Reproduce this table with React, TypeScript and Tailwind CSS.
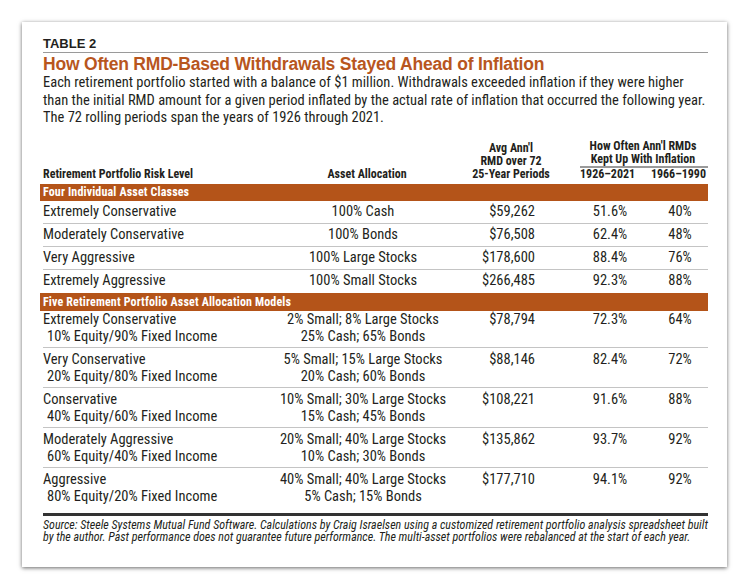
import React from "react";

const COND = "font-['Roboto',sans-serif] font-stretch-[78%]";

type Single = { name: string; alloc: string; rmd: string; a: string; b: string };
type Multi = { name: string; sub: string; alloc1: string; alloc2: string; rmd: string; a: string; b: string };

const singles: Single[] = [
  { name: "Extremely Conservative", alloc: "100% Cash", rmd: "$59,262", a: "51.6%", b: "40%" },
  { name: "Moderately Conservative", alloc: "100% Bonds", rmd: "$76,508", a: "62.4%", b: "48%" },
  { name: "Very Aggressive", alloc: "100% Large Stocks", rmd: "$178,600", a: "88.4%", b: "76%" },
  { name: "Extremely Aggressive", alloc: "100% Small Stocks", rmd: "$266,485", a: "92.3%", b: "88%" },
];

const multis: Multi[] = [
  { name: "Extremely Conservative", sub: "10% Equity/90% Fixed Income", alloc1: "2% Small; 8% Large Stocks", alloc2: "25% Cash; 65% Bonds", rmd: "$78,794", a: "72.3%", b: "64%" },
  { name: "Very Conservative", sub: "20% Equity/80% Fixed Income", alloc1: "5% Small; 15% Large Stocks", alloc2: "20% Cash; 60% Bonds", rmd: "$88,146", a: "82.4%", b: "72%" },
  { name: "Conservative", sub: "40% Equity/60% Fixed Income", alloc1: "10% Small; 30% Large Stocks", alloc2: "15% Cash; 45% Bonds", rmd: "$108,221", a: "91.6%", b: "88%" },
  { name: "Moderately Aggressive", sub: "60% Equity/40% Fixed Income", alloc1: "20% Small; 40% Large Stocks", alloc2: "10% Cash; 30% Bonds", rmd: "$135,862", a: "93.7%", b: "92%" },
  { name: "Aggressive", sub: "80% Equity/20% Fixed Income", alloc1: "40% Small; 40% Large Stocks", alloc2: "5% Cash; 15% Bonds", rmd: "$177,710", a: "94.1%", b: "92%" },
];

function Bar({ children, h }: { children: React.ReactNode; h: string }) {
  return (
    <div className={`${h} -ml-[3px] pl-[3px] bg-[#b45419] text-white font-bold text-[12px] flex items-center leading-none tracking-[0.15px]`}>
      {children}
    </div>
  );
}

export default function App() {
  return (
    <div className="w-[750px] h-[586px] bg-white pt-[22px] pl-[22px]">
      <div className={`w-[705px] h-[545px] bg-white shadow-[0_1px_4px_rgba(0,0,0,0.6)] pl-[21px] pr-[19px] pt-[14px] text-[#231f20] ${COND}`}>
        <div className="font-['Liberation_Sans',Arial,sans-serif] font-stretch-normal font-bold text-[13px] leading-[15px]">TABLE 2</div>
        <div className="mt-[1px] h-px bg-[#9a9a9a]" />
        <div className="font-['Liberation_Sans',Arial,sans-serif] font-stretch-normal font-bold text-[17.5px] leading-[20px] mt-[1px] text-[#b8561e] tracking-[-0.2px]">
          How Often RMD-Based Withdrawals Stayed Ahead of Inflation
        </div>
        <div className="text-[14.5px] leading-[17.5px]">
          Each retirement portfolio started with a balance of $1 million. Withdrawals exceeded inflation if they were higher than the initial RMD amount for a given period inflated by the actual rate of inflation that occurred the following year. The 72 rolling periods span the years of 1926 through 2021.
        </div>

        {/* column headers */}
        <div className="flex items-end mt-[17px] font-bold text-[12px] leading-[13.3px] h-[40px] pb-[2px] whitespace-nowrap">
          <div className="w-[210px]">Retirement Portfolio Risk Level</div>
          <div className="w-[228px] text-center">Asset Allocation</div>
          <div className="w-[60px] flex flex-col items-center">
            <span>Avg Ann'l</span>
            <span>RMD over 72</span>
            <span>25-Year Periods</span>
          </div>
          <div className="w-[128px] ml-[39px]">
            <div className="text-center border-b-2 border-[#9a9a9a] pr-[2px]">How Often Ann'l RMDs<br />Kept Up With Inflation</div>
            <div className="flex justify-between pr-[2px]">
              <span>1926–2021</span>
              <span>1966–1990</span>
            </div>
          </div>
        </div>

        <Bar h="h-[17px]">Four Individual Asset Classes</Bar>
        {singles.map((r, i) => (
          <div
            key={r.name}
            className={`flex items-center h-[23px] text-[14.5px] ${i < singles.length - 1 ? "border-b-[1.5px] border-[#c4c4c4]" : ""}`}
          >
            <div className="w-[210px]">{r.name}</div>
            <div className="w-[220px] text-center">{r.alloc}</div>
            <div className="w-[62px] text-right">{r.rmd}</div>
            <div className="w-[100px] ml-[25px] text-center">{r.a}</div>
            <div className="w-[40px] text-center">{r.b}</div>
          </div>
        ))}

        <Bar h="h-[18px]">Five Retirement Portfolio Asset Allocation Models</Bar>
        {multis.map((r, i) => (
          <div
            key={r.name}
            className={`flex text-[14.5px] leading-[17px] ${i === 0 ? "pt-0" : "pt-[2.5px]"} pb-[2.5px] ${i < multis.length - 1 ? "border-b-[1.5px] border-[#c4c4c4]" : ""}`}
          >
            <div className="w-[210px]">
              <div>{r.name}</div>
              <div className="pl-[4px]">{r.sub}</div>
            </div>
            <div className="w-[220px] text-center">
              <div>{r.alloc1}</div>
              <div>{r.alloc2}</div>
            </div>
            <div className="w-[62px] text-right">{r.rmd}</div>
            <div className="w-[100px] ml-[25px] text-center">{r.a}</div>
            <div className="w-[40px] text-center">{r.b}</div>
          </div>
        ))}

        <div className="mt-[6px] h-[2.5px] bg-[#333333]" />
        <div className="italic text-[12px] leading-[12.5px] mt-[3px]">
          Source: Steele Systems Mutual Fund Software. Calculations by Craig Israelsen using a customized retirement portfolio analysis spreadsheet built by the author. Past performance does not guarantee future performance. The multi-asset portfolios were rebalanced at the start of each year.
        </div>
      </div>
    </div>
  );
}
